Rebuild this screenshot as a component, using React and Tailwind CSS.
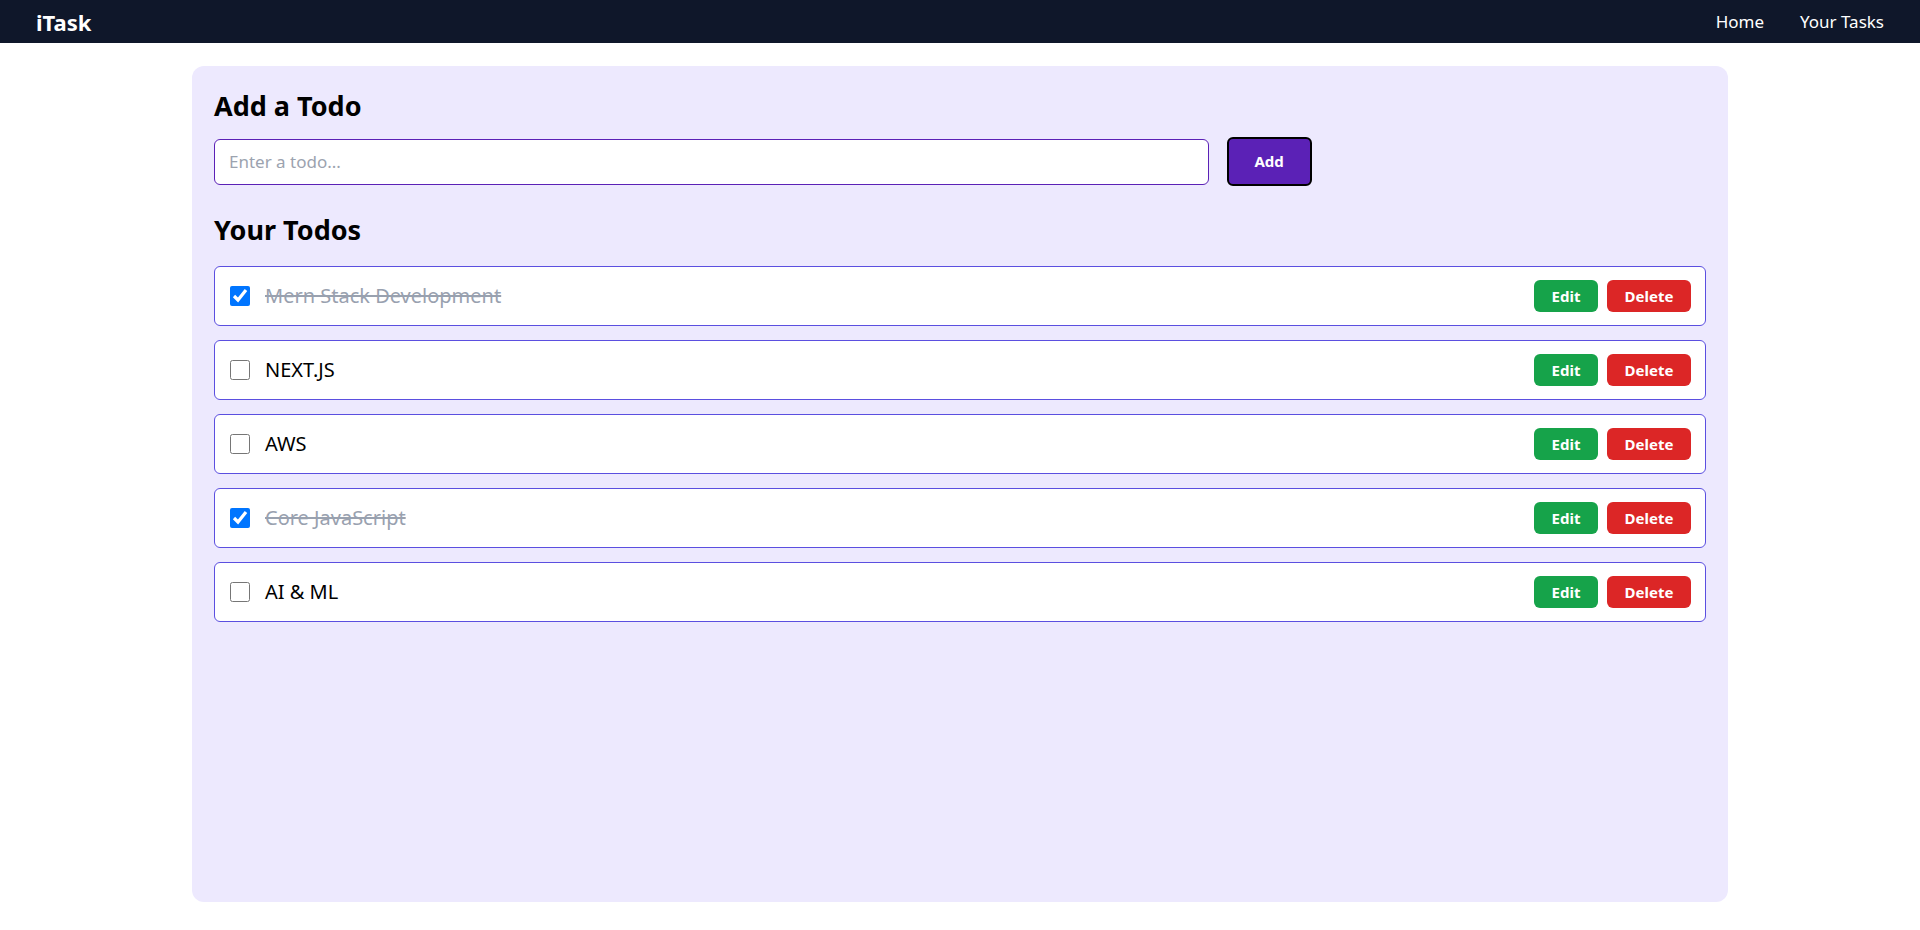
import React, { useState } from 'react';

function Navbar() {
  return (
    <nav className="flex h-[43px] items-center justify-between bg-[#0f172a] px-[36px] text-white">
      <div className="text-[22px] font-bold leading-none">iTask</div>
      <ul className="flex gap-[36px] text-[17px]">
        <li className="cursor-pointer">Home</li>
        <li className="cursor-pointer">Your Tasks</li>
      </ul>
    </nav>
  );
}

function TodoRow({ todo, onToggle }) {
  return (
    <div className="flex h-[60px] items-center justify-between rounded-md border border-[#5b4fe0] bg-white pl-[15px] pr-[14px]">
      <div className="flex items-center gap-[15px]">
        <input
          type="checkbox"
          checked={todo.done}
          onChange={() => onToggle(todo.id)}
          className="m-0 h-5 w-5 accent-[#0075ff]"
        />
        <span className={`text-[20px] ${todo.done ? 'text-gray-400 line-through' : 'text-black'}`}>
          {todo.text}
        </span>
      </div>
      <div className="flex gap-[9px]">
        <button className="h-[32px] w-[64px] rounded-md bg-[#16a34a] text-[15px] font-bold text-white">Edit</button>
        <button className="h-[32px] w-[84px] rounded-md bg-[#dc2626] text-[15px] font-bold text-white">Delete</button>
      </div>
    </div>
  );
}

export default function App() {
  const [todos, setTodos] = useState([
    { id: 1, text: 'Mern Stack Development', done: true },
    { id: 2, text: 'NEXT.JS', done: false },
    { id: 3, text: 'AWS', done: false },
    { id: 4, text: 'Core JavaScript', done: true },
    { id: 5, text: 'AI & ML', done: false },
  ]);
  const [todo, setTodo] = useState('');

  const toggle = (id) => {
    setTodos(todos.map(t => (t.id === id ? { ...t, done: !t.done } : t)));
  };

  return (
    <div className="min-h-[930px] bg-white font-['Noto_Sans',sans-serif]">
      <Navbar />

      {/* main card */}
      <div className="mx-auto mt-[23px] min-h-[836px] w-4/5 rounded-xl bg-[#ede9fe] px-[22px] pt-[22px] pb-[22px]">
        <h2 className="text-[27px] font-bold leading-[36px] text-black">Add a Todo</h2>
        <div className="mt-[13px] flex items-center gap-[18px]">
          <input
            type="text"
            value={todo}
            onChange={e => setTodo(e.target.value)}
            placeholder="Enter a todo..."
            className="h-[46px] w-2/3 rounded-md border border-[#5b21b6] bg-white px-[14px] text-[17px] outline-none placeholder:text-[#9ca3af]"
          />
          <button className="h-[49px] w-[85px] rounded-md border-2 border-black bg-[#5b21b6] text-[15px] font-bold text-white">
            Add
          </button>
        </div>

        <h2 className="mt-[26px] text-[27px] font-bold leading-[36px] text-black">Your Todos</h2>
        <div className="mt-[18px] flex flex-col gap-[14px]">
          {todos.map(t => (
            <TodoRow key={t.id} todo={t} onToggle={toggle} />
          ))}
        </div>
      </div>
    </div>
  );
}
